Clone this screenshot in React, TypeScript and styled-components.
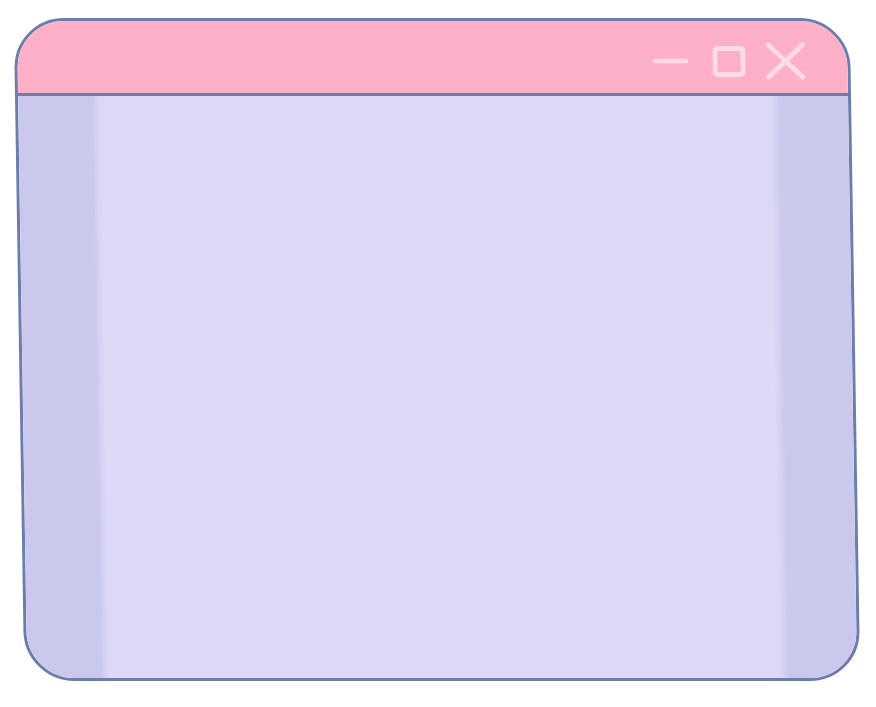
import React from "react";
import styled, { createGlobalStyle } from "styled-components";

const Global = createGlobalStyle`
  html, body { margin: 0; padding: 0; background: #ffffff; }
  body { font-family: "Liberation Sans", Arial, sans-serif; }
`;

const Page = styled.div`
  width: 876px;
  height: 707px;
  padding: 18px 0 0 19px;
  box-sizing: border-box;
`;

const Window = styled.div`
  width: 836px;
  height: 663px;
  box-sizing: border-box;
  border: 3.5px solid #6c7dab;
  border-radius: 50px;
  overflow: hidden;
  display: flex;
  flex-direction: column;
  transform: skewX(0.9deg);
  transform-origin: center center;
`;

const TitleBar = styled.div`
  height: 75px;
  flex: none;
  box-sizing: border-box;
  background: #ffb0c9;
  border-bottom: 3px solid #6c7dab;
  display: flex;
  align-items: center;
  justify-content: flex-end;
  padding: 8px 42px 0 0;
`;

const Body = styled.div`
  flex: 1;
  background: linear-gradient(
    to right,
    #cbc8ee 0px,
    #cbc8ee 74px,
    #d5d2f3 78px,
    #dcd8f6 82px,
    #dcd8f6 752px,
    #d4d1f2 757px,
    #cbc8ee 762px,
    #cbc8ee 100%
  );
`;

const Control = styled.svg<{ $gap?: number }>`
  display: block;
  flex: none;
  margin-left: ${(p) => p.$gap ?? 0}px;
`;

const ICON = "#ffdbe7";

export default function App() {
  return (
    <>
      <Global />
      <Page>
        <Window>
          <TitleBar>
            <Control width="36" height="6" viewBox="0 0 36 6">
              <line x1="2.5" y1="3" x2="33.5" y2="3" stroke={ICON} strokeWidth="4.5" strokeLinecap="round" />
            </Control>
            <Control $gap={24} width="33" height="31" viewBox="0 0 33 31">
              <rect x="2.5" y="2.5" width="28" height="26" rx="2.5" fill="none" stroke={ICON} strokeWidth="5" />
            </Control>
            <Control $gap={20} width="40" height="38" viewBox="0 0 40 38">
              <line x1="3" y1="3" x2="37" y2="35" stroke={ICON} strokeWidth="5" strokeLinecap="round" />
              <line x1="37" y1="3" x2="3" y2="35" stroke={ICON} strokeWidth="5" strokeLinecap="round" />
            </Control>
          </TitleBar>
          <Body />
        </Window>
      </Page>
    </>
  );
}
